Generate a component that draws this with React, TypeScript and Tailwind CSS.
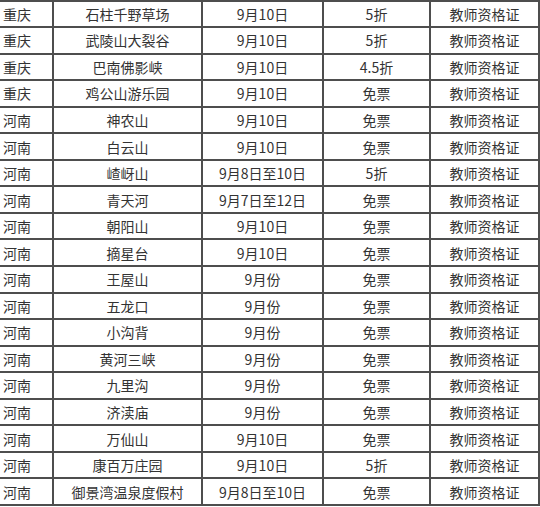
const rows: [string, string, string, string, string][] = [
  ['重庆', '石柱千野草场', '9月10日', '5折', '教师资格证'],
  ['重庆', '武陵山大裂谷', '9月10日', '5折', '教师资格证'],
  ['重庆', '巴南佛影峡', '9月10日', '4.5折', '教师资格证'],
  ['重庆', '鸡公山游乐园', '9月10日', '免票', '教师资格证'],
  ['河南', '神农山', '9月10日', '免票', '教师资格证'],
  ['河南', '白云山', '9月10日', '免票', '教师资格证'],
  ['河南', '嵖岈山', '9月8日至10日', '5折', '教师资格证'],
  ['河南', '青天河', '9月7日至12日', '免票', '教师资格证'],
  ['河南', '朝阳山', '9月10日', '免票', '教师资格证'],
  ['河南', '摘星台', '9月10日', '免票', '教师资格证'],
  ['河南', '王屋山', '9月份', '免票', '教师资格证'],
  ['河南', '五龙口', '9月份', '免票', '教师资格证'],
  ['河南', '小沟背', '9月份', '免票', '教师资格证'],
  ['河南', '黄河三峡', '9月份', '免票', '教师资格证'],
  ['河南', '九里沟', '9月份', '免票', '教师资格证'],
  ['河南', '济渎庙', '9月份', '免票', '教师资格证'],
  ['河南', '万仙山', '9月10日', '免票', '教师资格证'],
  ['河南', '康百万庄园', '9月10日', '5折', '教师资格证'],
  ['河南', '御景湾温泉度假村', '9月8日至10日', '免票', '教师资格证'],
]

export default function App() {
  return (
    <div
      className="w-[540px] h-[507px] overflow-hidden bg-white text-[14px] text-[#333]"
      style={{ fontFamily: '"Noto Sans CJK SC", "Noto Sans", sans-serif' }}
    >
      <div className="-mt-[0.5px] border-b-2 border-[#4e4e4e]">
        {rows.map((r, i) => (
          <div key={i} className="flex h-[26.55px] border-t-2 border-[#4e4e4e] leading-none">
            <div className="w-[54px] shrink-0 border-r-2 border-[#4e4e4e] flex items-center pl-[3px]">{r[0]}</div>
            <div className="w-[149px] shrink-0 border-r-2 border-[#4e4e4e] flex items-center justify-center">{r[1]}</div>
            <div className="w-[121px] shrink-0 border-r-2 border-[#4e4e4e] flex items-center justify-center">{r[2]}</div>
            <div className="w-[107px] shrink-0 border-r-2 border-[#4e4e4e] flex items-center justify-center">{r[3]}</div>
            <div className="w-[109px] shrink-0 border-r-2 border-[#4e4e4e] flex items-center justify-center">{r[4]}</div>
          </div>
        ))}
      </div>
    </div>
  )
}
